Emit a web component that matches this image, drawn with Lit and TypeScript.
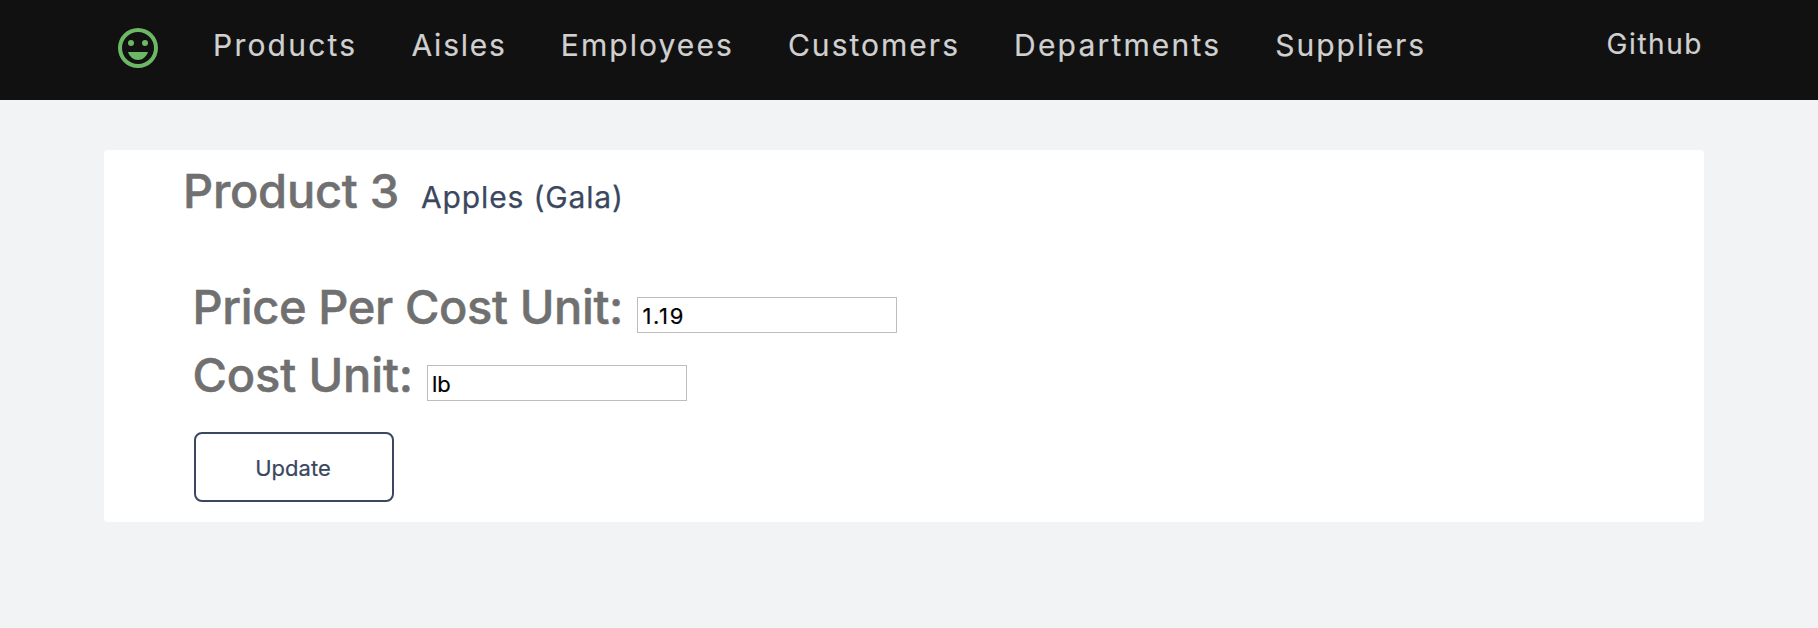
import { LitElement, html, css } from "lit";
import { customElement } from "lit/decorators.js";
import { styleMap } from "lit/directives/style-map.js";

interface NavItem {
  label: string;
  tracking: number;
}

const NAV: NavItem[] = [
  { label: "Products", tracking: 2.22 },
  { label: "Aisles", tracking: 1.8 },
  { label: "Employees", tracking: 2.06 },
  { label: "Customers", tracking: 2.02 },
  { label: "Departments", tracking: 2.18 },
  { label: "Suppliers", tracking: 2.0 },
];

@customElement("site-header")
export class SiteHeader extends LitElement {
  static styles = css`
    :host {
      display: block;
    }
    .bar {
      box-sizing: border-box;
      height: 100px;
      padding: 0 115px 0 114px;
      background: #111;
      color: #d0d0d0;
      display: flex;
      align-items: flex-start;
      -webkit-text-stroke: 0.2px currentColor;
    }
    .logo {
      width: 48px;
      height: 48px;
      margin: 24px 51px 0 0;
      fill: #6cb865;
      flex: none;
    }
    .links {
      display: flex;
      gap: 54.1px;
      flex: 1;
      padding-top: 25px;
    }
    .link {
      font-size: 30px;
      line-height: 40px;
      white-space: nowrap;
    }
    .github {
      padding-top: 24px;
      font-size: 28px;
      line-height: 40px;
      letter-spacing: 1.55px;
      white-space: nowrap;
    }
  `;

  render() {
    return html`<header class="bar">
      <svg class="logo" viewBox="0 0 24 24">
        <path
          d="M12 2a10 10 0 1 0 0 20 10 10 0 0 0 0-20zm0 18a8 8 0 1 1 0-16 8 8 0 0 1 0 16zM7 14c.8 2.3 2.7 4 5 4s4.200-1.700 5-4z"
        />
        <circle cx="8.5" cy="9.500" r="1.5" />
        <circle cx="15.500" cy="9.500" r="1.5" />
      </svg>
      <nav class="links">
        ${NAV.map(
          (n) => html`<span class="link" style=${styleMap({ letterSpacing: `${n.tracking}px` })}>${n.label}</span>`
        )}
      </nav>
      <span class="github">Github</span>
    </header>`;
  }
}

@customElement("app-root")
export class AppRoot extends LitElement {
  static styles = css`
    :host {
      display: block;
      box-sizing: border-box;
      min-height: 100vh;
      background: #f1f3f5;
      font-family: Inter, "Liberation Sans", sans-serif;
    }
    .card {
      box-sizing: border-box;
      width: 1600px;
      height: 372px;
      margin: 50px 0 0 104px;
      padding: 11px 0 0 79px;
      background: #fff;
      border-radius: 4px;
    }
    .title {
      display: flex;
      align-items: baseline;
      height: 116px;
      line-height: 60px;
      white-space: nowrap;
    }
    .heading,
    .label {
      font-size: 47px;
      font-weight: 500;
      color: #707070;
      white-space: nowrap;
      -webkit-text-stroke: 0.5px currentColor;
    }
    .heading {
      width: 238px;
      letter-spacing: -0.25px;
    }
    .name {
      font-size: 30px;
      letter-spacing: 0.86px;
      color: #3a475f;
      -webkit-text-stroke: 0.25px currentColor;
    }
    .form {
      display: flex;
      flex-direction: column;
      align-items: flex-start;
      padding-left: 9px;
    }
    .row {
      display: flex;
      align-items: baseline;
      height: 68px;
      line-height: 60px;
    }
    .price {
      box-sizing: border-box;
      width: 445px;
      padding-left: 0.5px;
      letter-spacing: -0.38px;
    }
    .unit {
      box-sizing: border-box;
      width: 235px;
      padding-left: 0.5px;
      letter-spacing: -0.15px;
    }
    .input {
      box-sizing: border-box;
      width: 260px;
      height: 36px;
      margin: 0;
      padding: 3px 4px 0;
      border: 1px solid #bdbdbd;
      border-radius: 0;
      background: #fff;
      color: #000;
      outline: none;
      font: 400 22px Inter, "Liberation Sans", sans-serif;
      -webkit-text-stroke: 0.2px currentColor;
    }
    .number {
      padding-left: 4.5px;
      letter-spacing: 1.6px;
    }
    .button {
      box-sizing: border-box;
      width: 200px;
      height: 70px;
      margin: 19px 0 0 2px;
      padding: 2px 2px 0 0;
      border: 2px solid #3a475f;
      border-radius: 8px;
      background: #fff;
      color: #3a475f;
      font: 400 22px Inter, "Liberation Sans", sans-serif;
      -webkit-text-stroke: 0.2px currentColor;
    }
  `;

  render() {
    return html`
      <site-header></site-header>
      <main class="card">
        <div class="title">
          <span class="heading">Product 3</span>
          <span class="name">Apples (Gala)</span>
        </div>
        <form class="form">
          <label class="row">
            <span class="label price">Price Per Cost Unit:</span>
            <input class="input number" value="1.19" />
          </label>
          <label class="row">
            <span class="label unit">Cost Unit:</span>
            <input class="input" value="lb" />
          </label>
          <button class="button" type="button">Update</button>
        </form>
      </main>
    `;
  }
}
